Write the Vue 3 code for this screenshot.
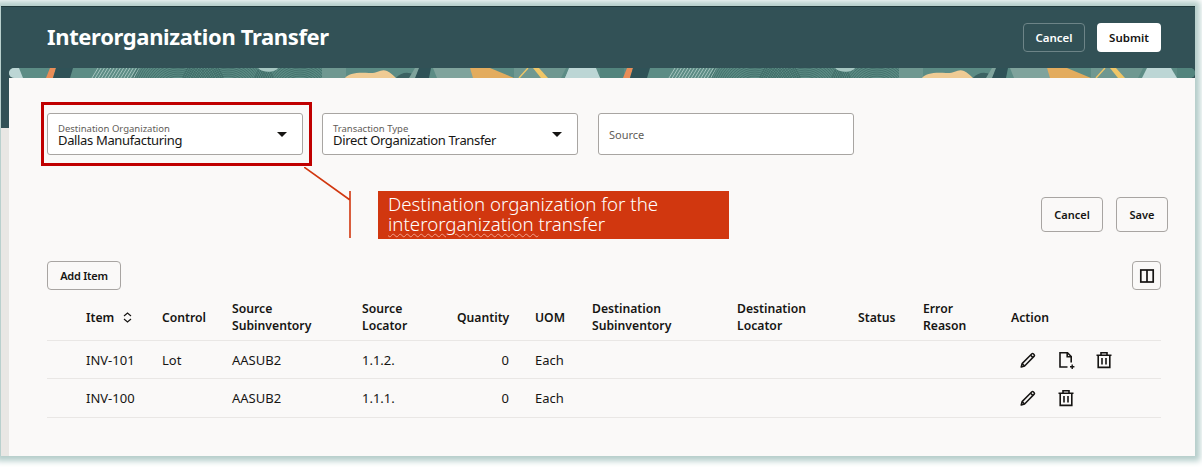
<script setup>
const columns = [
  { key: 'item', label: ['Item'], sort: true },
  { key: 'control', label: ['Control'] },
  { key: 'sub', label: ['Source', 'Subinventory'] },
  { key: 'loc', label: ['Source', 'Locator'] },
  { key: 'qty', label: ['Quantity'], right: true },
  { key: 'uom', label: ['UOM'] },
  { key: 'dsub', label: ['Destination', 'Subinventory'] },
  { key: 'dloc', label: ['Destination', 'Locator'] },
  { key: 'status', label: ['Status'] },
  { key: 'err', label: ['Error', 'Reason'] },
  { key: 'action', label: ['Action'] }
]

const rows = [
  { item: 'INV-101', control: 'Lot', sub: 'AASUB2', loc: '1.1.2.', qty: '0', uom: 'Each', attach: true },
  { item: 'INV-100', control: '', sub: 'AASUB2', loc: '1.1.1.', qty: '0', uom: 'Each', attach: false }
]

// the banner artwork repeats every 577px
const repeats = [0, 577]
const rings = Array.from({ length: 16 }, (_, i) => 18 + i * 2)
const ringCentres = [178, 228, 300]
const hatch = Array.from({ length: 14 }, (_, i) => 92 + i * 3.2)
</script>

<template>
  <div class="page">
    <div class="window">
      <header class="header">
        <h1>Interorganization Transfer</h1>
        <div class="header-actions">
          <button type="button" class="btn-ghost">Cancel</button>
          <button type="button" class="btn-white">Submit</button>
        </div>
      </header>

      <div class="banner">
        <svg class="banner-art" viewBox="9 0 1186 10" preserveAspectRatio="none">
          <defs>
            <clipPath id="strip"><rect x="9" width="1186" height="10" rx="5" /></clipPath>
          </defs>
          <g clip-path="url(#strip)">
            <rect x="9" width="1186" height="10" fill="#5c8c85" />
            <g v-for="dx in repeats" :key="dx" :transform="`translate(${dx} 0)`">
              <path d="M-12 10l4-10h27l4 10z" fill="#bcd6d5" />
              <path d="M50 0h6l-3 10h-7z" fill="#e98d57" />
              <path d="M56 0h17l-3 10H53z" fill="#2f5257" />
              <path v-for="x in hatch" :key="x" :d="`M${x} 10l6-10`" stroke="#a6c4bf" stroke-width="1" />
              <g v-for="c in ringCentres" :key="c">
                <circle v-for="r in rings" :key="r" :cx="c" cy="26" :r="r" fill="none" stroke="#3a6562" stroke-width="0.7" />
              </g>
              <path d="M258 0h20c-3 5-16 5-20 0z" fill="#a5c6c1" />
              <rect x="322" width="24" height="10" fill="#6f9891" />
              <path d="M345 10c3-5 14-6 24-5 8 1 12-5 18-2 4 2 6 4 9 7z" fill="#efcb94" />
              <path d="M396 10c4-5 12-7 18-3l4 3z" fill="#3c6262" />
              <path d="M431 0h-13l-3 10h14z" fill="#2f5257" />
              <path d="M409 10l6-10h4l-4 10z" fill="#7fa39c" />
              <path d="M433 0h37l6 10h-39z" fill="#7fa39c" />
              <path d="M470 0h20l24 10h-41z" fill="#e3ac5e" />
              <path d="M514 0h52l-5 10h-47z" fill="#6f9891" />
              <path d="M528 0l-9 10" stroke="#f0c667" stroke-width="1.4" />
              <path d="M533 0h6l9 10h-7z" fill="#f0c667" />
              <path d="M570 0h24l6 10h-35z" fill="#bcd6d5" />
              <rect x="600" width="24" height="10" fill="#52847d" />
            </g>
          </g>
        </svg>
      </div>

      <main class="sheet">
        <div class="fields">
          <div class="field">
            <span class="field-label">Destination Organization</span>
            <span class="field-value">Dallas Manufacturing</span>
            <i class="caret"></i>
          </div>
          <div class="field">
            <span class="field-label">Transaction Type</span>
            <span class="field-value">Direct Organization Transfer</span>
            <i class="caret"></i>
          </div>
          <div class="field field-empty">
            <span class="field-placeholder">Source</span>
          </div>
        </div>

        <div class="form-actions">
          <button type="button" class="btn">Cancel</button>
          <button type="button" class="btn">Save</button>
        </div>

        <div class="table-tools">
          <button type="button" class="btn btn-small">Add Item</button>
          <button type="button" class="btn btn-icon" aria-label="Columns">
            <svg width="18" height="18" viewBox="0 0 18 18" fill="none" stroke="#161513" stroke-width="1.7">
              <rect x="2.8" y="3" width="12.4" height="12" />
              <path d="M9 3v12" />
            </svg>
          </button>
        </div>

        <table class="grid">
          <thead>
            <tr>
              <th v-for="c in columns" :key="c.key" :class="['col-' + c.key, { right: c.right }]">
                <template v-for="(line, i) in c.label" :key="i"><br v-if="i" />{{ line }}</template>
                <svg v-if="c.sort" class="sort" width="9" height="11" viewBox="0 0 9 11" fill="none" stroke="#161513" stroke-width="1.2">
                  <path d="M1 4 4.5 1 8 4M1 7l3.5 3L8 7" />
                </svg>
              </th>
            </tr>
          </thead>
          <tbody>
            <tr v-for="r in rows" :key="r.item">
              <td class="col-item">{{ r.item }}</td>
              <td class="col-control">{{ r.control }}</td>
              <td class="col-sub">{{ r.sub }}</td>
              <td class="col-loc">{{ r.loc }}</td>
              <td class="col-qty right">{{ r.qty }}</td>
              <td class="col-uom">{{ r.uom }}</td>
              <td class="col-dsub"></td>
              <td class="col-dloc"></td>
              <td class="col-status"></td>
              <td class="col-err"></td>
              <td class="col-action">
                <div class="row-icons">
                  <svg width="20" height="20" viewBox="0 0 20 20" fill="none" stroke="#161513" stroke-width="1.5" stroke-linejoin="round">
                    <path d="M3.2 17l.9-3.4L13.9 3.8a1 1 0 0 1 1.4 0l.9.9a1 1 0 0 1 0 1.4L6.6 16z" />
                    <path d="M12.6 5.2l2.2 2.2M4.1 13.6l2.5 2.4" />
                  </svg>
                  <svg v-if="r.attach" width="20" height="20" viewBox="0 0 20 20" fill="none" stroke="#161513" stroke-width="1.6">
                    <path d="M11.5 17H4V2.8h7.5L15.2 6.5v6" />
                    <path d="M11.2 2.8v4h4" />
                    <path d="M16.2 14.5v4.4M14 16.7h4.4" stroke-width="1.4" />
                  </svg>
                  <svg width="20" height="20" viewBox="0 0 20 20" fill="none" stroke="#161513" stroke-width="1.6">
                    <path d="M2.5 5.2h15M7 5V2.8h6V5" />
                    <path d="M4.2 5.2v12.2h11.6V5.2" />
                    <path d="M8 8v6.5M12 8v6.5" />
                  </svg>
                </div>
              </td>
            </tr>
          </tbody>
        </table>

        <!-- callout sits over the form, it is not part of the page flow -->
        <div class="mark-box"></div>
        <svg class="leader" width="60" height="80" viewBox="0 0 60 80" fill="none" stroke="#d1370f" stroke-width="1.6">
          <path d="M0 0l46 33M46 24v47" />
        </svg>
        <div class="callout">
          Destination organization for the<br />
          <span class="squiggle">interorganization </span>transfer
        </div>
      </main>
    </div>
  </div>
</template>

<style>
html,
body {
  margin: 0;
  background: #fff;
}
</style>

<style scoped>
.page {
  width: 1202px;
  height: 467px;
  overflow: hidden;
  box-sizing: border-box;
  padding: 6px 0 0 1px;
  font-family: 'Noto Sans', 'Open Sans', sans-serif;
  color: #161513;
}

.window {
  width: 1194px;
  height: 449px;
  display: flex;
  flex-direction: column;
  background: linear-gradient(#325156 121px, #e9e7e4 121px);
  border-top: 1px solid #20393b;
  box-shadow: 0 0 6px 5px #b4cdca;
  position: relative;
}

.header {
  height: 61px;
  flex: none;
  display: flex;
  align-items: center;
  justify-content: space-between;
  box-sizing: border-box;
  padding: 0 34px 0 46px;
  background: #325156;
}

.header h1 {
  margin: 0 0 4px;
  font-size: 22px;
  font-weight: 700;
  color: #fff;
  letter-spacing: -0.36px;
}

.header-actions {
  display: flex;
  gap: 12px;
}

button {
  font-family: inherit;
  font-weight: 600;
  font-size: 11.5px;
  cursor: pointer;
}

.btn-ghost {
  width: 62px;
  height: 29px;
  padding: 0;
  background: transparent;
  color: #fff;
  border: 1px solid #6d8487;
  border-radius: 4px;
}

.btn-white {
  width: 64px;
  height: 29px;
  padding: 0;
  background: #fff;
  color: #161513;
  border: none;
  border-radius: 4px;
}

.banner {
  height: 9.5px;
  flex: none;
  padding-left: 8px;
  overflow: hidden;
}

.banner-art {
  display: block;
  width: 100%;
  height: 10px;
}

.sheet {
  flex: 1;
  margin-left: 8px;
  background: #faf9f8;
  position: relative;
  box-sizing: border-box;
  padding: 35.5px 27px 0 38px;
}

.fields {
  display: flex;
  gap: 19px;
}

.field {
  width: 256px;
  height: 42px;
  box-sizing: border-box;
  padding: 9px 10px 0;
  background: #fff;
  border: 1px solid #a8a5a2;
  border-radius: 3px;
  position: relative;
  display: flex;
  flex-direction: column;
}

.field-label {
  font-size: 9.5px;
  line-height: 11px;
  color: #5f5c58;
}

.field-value {
  font-size: 13px;
  line-height: 12px;
  letter-spacing: -0.35px;
  color: #161513;
}

.field-empty {
  justify-content: center;
  padding-top: 0;
  margin-left: 1px;
}

.field-placeholder {
  font-size: 11px;
  color: #5f5c58;
}

.caret {
  position: absolute;
  right: 15px;
  top: 18px;
  width: 0;
  height: 0;
  border-left: 5px solid transparent;
  border-right: 5px solid transparent;
  border-top: 5px solid #161513;
}

.form-actions {
  display: flex;
  justify-content: flex-end;
  gap: 13px;
  margin-top: 42px;
}

.btn {
  height: 35px;
  padding: 0;
  width: 62px;
  font-size: 11px;
  background: transparent;
  color: #161513;
  border: 1px solid #a8a5a2;
  border-radius: 4px;
}

.form-actions .btn:last-child {
  width: 52px;
}

.table-tools {
  display: flex;
  justify-content: space-between;
  margin-top: 29px;
  padding-right: 7px;
}

.btn-small {
  height: 29px;
  width: 74px;
  letter-spacing: -0.25px;
}

.btn-icon {
  height: 29px;
  width: 29px;
  display: flex;
  align-items: center;
  justify-content: center;
}

.grid {
  width: 1114px;
  margin-top: 4px;
  border-collapse: collapse;
  table-layout: fixed;
  font-size: 13px;
}

.grid th,
.grid td {
  padding: 0;
  text-align: left;
  border-bottom: 1px solid #e9e7e5;
}

.grid th {
  height: 46px;
  font-weight: 600;
  font-size: 12.2px;
  line-height: 17px;
}

.grid td {
  height: 38px;
}

.grid tbody tr:first-child td {
  height: 37px;
}

.grid .right {
  text-align: right;
}

.col-item { width: 115px; padding-left: 39px !important; box-sizing: border-box; }
.col-control { width: 70px; }
.col-sub { width: 130px; }
.col-loc { width: 95px; }
.col-qty { width: 52px; }
.col-uom { padding-left: 26px !important; box-sizing: border-box; width: 83px; }
.col-dsub { width: 145px; }
.col-dloc { width: 121px; }
.col-status { width: 65px; }
.col-err { width: 88px; }
.col-action { width: auto; }

.sort {
  margin-left: 9px;
  vertical-align: -1px;
}

.row-icons {
  display: flex;
  gap: 18px;
  padding-left: 7px;
  align-items: center;
}

.mark-box {
  position: absolute;
  left: 32px;
  top: 24.5px;
  width: 265px;
  height: 58px;
  border: 3px solid #c00000;
  pointer-events: none;
}

.leader {
  position: absolute;
  left: 295px;
  top: 89.5px;
}

.callout {
  position: absolute;
  left: 369px;
  top: 113.5px;
  width: 351px;
  height: 48px;
  box-sizing: border-box;
  padding: 3px 10px 0;
  background: #d1370f;
  color: #fff;
  font-weight: 300;
  font-size: 18.7px;
  line-height: 20px;
}

.squiggle {
  text-decoration: underline wavy #f2a08a 1px;
  text-underline-offset: 2px;
}
</style>
